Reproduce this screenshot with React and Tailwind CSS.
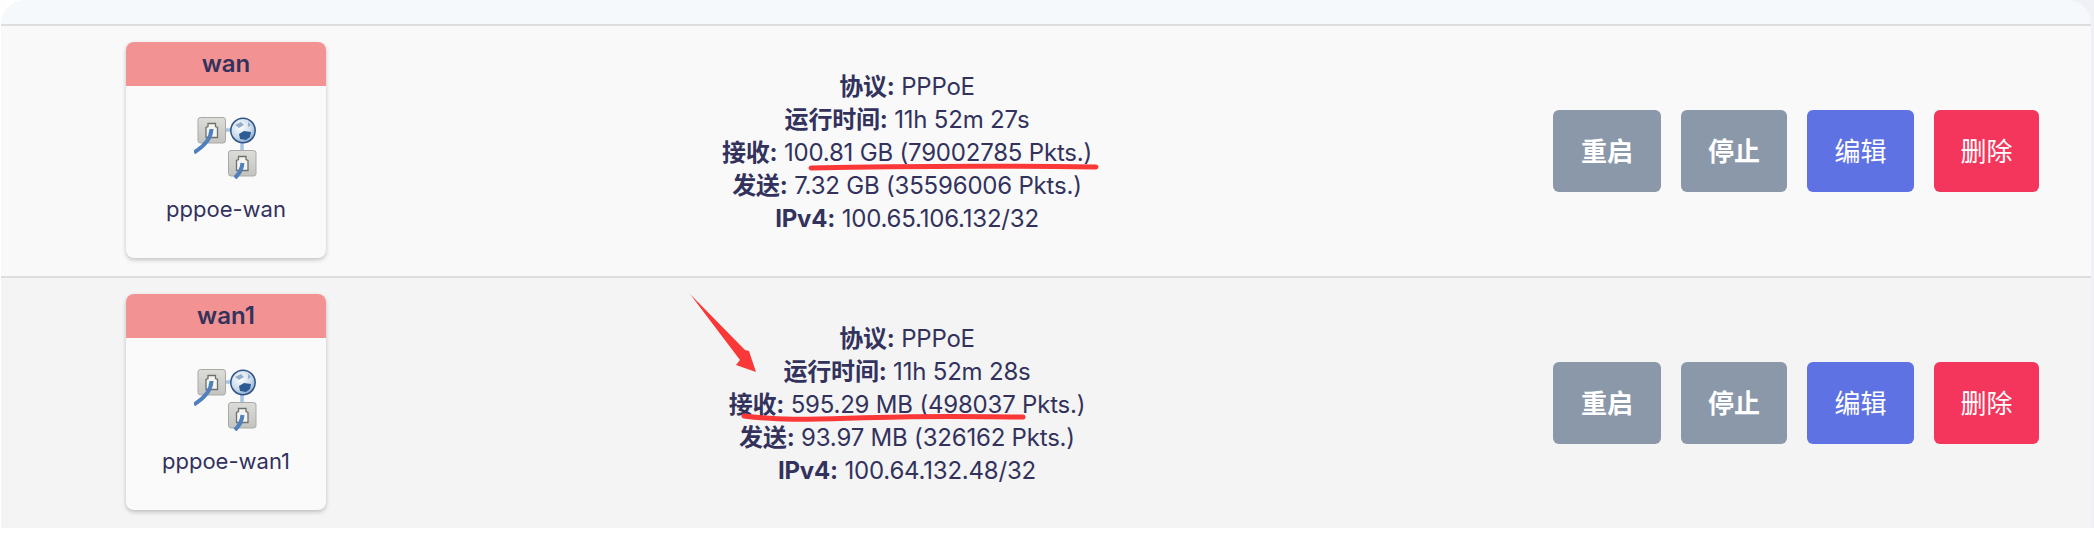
import React from 'react';

const FONT = '"Inter", "Noto Sans CJK SC", sans-serif';

const rows = [
    {
        name: 'wan',
        device: 'pppoe-wan',
        bg: 'bg-[#f9f9f9]',
        info: [
            ['协议:', 'PPPoE'],
            ['运行时间:', '11h 52m 27s'],
            ['接收:', '100.81 GB (79002785 Pkts.)'],
            ['发送:', '7.32 GB (35596006 Pkts.)'],
            ['IPv4:', '100.65.106.132/32'],
        ],
    },
    {
        name: 'wan1',
        device: 'pppoe-wan1',
        bg: 'bg-[#f4f4f4]',
        info: [
            ['协议:', 'PPPoE'],
            ['运行时间:', '11h 52m 28s'],
            ['接收:', '595.29 MB (498037 Pkts.)'],
            ['发送:', '93.97 MB (326162 Pkts.)'],
            ['IPv4:', '100.64.132.48/32'],
        ],
    },
];

const Socket = ({ x, y, id }) => (
    <g>
        <rect x={x} y={y} width="27.5" height="25.5" rx="2.5" fill={`url(#${id})`} stroke="#a9aaa5" strokeWidth="1" />
        <path
            d={`M${x + 8} ${y + 20} v-10 l2 -1 v-3 h7.5 v3 l2 1 v10 z`}
            fill="#f4f4f2"
            stroke="#6f706c"
            strokeWidth="1.3"
        />
    </g>
);

const PppoeIcon = () => (
    <svg width="64" height="64" viewBox="0 0 64 64" className="block">
        <defs>
            <linearGradient id="sock" x1="0" y1="0" x2="0" y2="1">
                <stop offset="0" stopColor="#dcdcd9" />
                <stop offset="1" stopColor="#c3c4bf" />
            </linearGradient>
            <radialGradient id="globe" cx="0.4" cy="0.35" r="0.75">
                <stop offset="0" stopColor="#ffffff" />
                <stop offset="0.6" stopColor="#c9d9ea" />
                <stop offset="1" stopColor="#7399c5" />
            </radialGradient>
        </defs>
        <path d="M30 15 H38 M48 28 V36" stroke="#a9c3e4" strokeWidth="3.5" fill="none" />
        <Socket x={4} y={2.5} id="sock" />
        <Socket x={34.5} y={35.5} id="sock" />
        <circle cx="49" cy="15.5" r="12.2" fill="url(#globe)" stroke="#2f5488" strokeWidth="1.5" />
        <path d="M45 19 l5 -3 l7 1 l-1 5 l-4 3 l-6 -1 z" fill="#2d5c94" />
        <path d="M41 10 l6 -3 l3 3 l-5 3 z" fill="#94adc9" />
        <path d="M54 7 l3 3 l-3 2 z" fill="#94adc9" />
        <path d="M17.5 14 C17 25 9 32 0 37.5" stroke="#4f7fbd" strokeWidth="4" fill="none" />
        <path d="M48.5 48 C48 54 45 59 41 63" stroke="#4f7fbd" strokeWidth="4" fill="none" />
    </svg>
);

const InterfaceCard = ({ name, device }) => (
    <div className="w-[200px] h-[216px] mb-[2px] rounded-[8px] bg-[#fafafa] overflow-hidden shadow-[0_2px_4px_rgba(0,0,0,0.22)] flex flex-col">
        <div className="h-[44px] bg-[#f29292] flex items-center justify-center text-[24px] font-semibold">{name}</div>
        <div className="flex-1 flex flex-col items-center pt-[29px]">
            <PppoeIcon />
            <div className="mt-[16px] text-[22px] leading-[28px]">{device}</div>
        </div>
    </div>
);

const ActionButton = ({ label, className }) => (
    <button className={`h-[82px] rounded-[6px] text-white text-[26px] ${className}`}>{label}</button>
);

const Annotations = () => (
    <svg width="2094" height="544" viewBox="0 0 2094 544" className="absolute inset-0 pointer-events-none">
        <path d="M811 168 C900 166 1010 166 1096 167" stroke="#fb3838" strokeWidth="5" strokeLinecap="round" fill="none" />
        <path d="M744 416 C790 422 830 418 900 417 C950 416 990 417 1023 417" stroke="#fb3838" strokeWidth="5" strokeLinecap="round" fill="none" />
        <path d="M690 294 L745 350 L749 351 L756 372 L736 365 L740 360 Z" fill="#fb3838" />
    </svg>
);

const App = () => {
    return (
        <div className="relative w-[2094px] h-[544px] bg-white overflow-hidden text-[#32325d]" style={{ fontFamily: FONT }}>
            <div className="absolute right-0 top-0 w-[40px] h-[528px] bg-[#eff1f6]" />
            <div className="relative w-[2090px] ml-px">
                <div className="h-[24px] rounded-t-[28px] bg-[#f5f9fc]" />
                {rows.map(row => (
                    <div key={row.name} className={`h-[252px] border-t-2 border-[#dddddd] ${row.bg} flex items-center`}>
                        <div className="w-[325px] pl-[125px] shrink-0">
                            <InterfaceCard name={row.name} device={row.device} />
                        </div>
                        <div className="w-[1162px] shrink-0 pt-[3px] text-center text-[24px] leading-[33px] tracking-[-0.2px]">
                            {row.info.map(([label, value]) => (
                                <div key={label}>
                                    <span className="font-bold">{label}</span> {value}
                                </div>
                            ))}
                        </div>
                        <div className="ml-[65px] flex gap-[20px]">
                            <ActionButton label="重启" className="w-[108px] bg-[#8a98a9] font-bold" />
                            <ActionButton label="停止" className="w-[106px] bg-[#8a98a9] font-bold" />
                            <ActionButton label="编辑" className="w-[107px] bg-[#5e72e4]" />
                            <ActionButton label="删除" className="w-[105px] bg-[#f5365c]" />
                        </div>
                    </div>
                ))}
            </div>
            <Annotations />
        </div>
    );
};

export default App;
